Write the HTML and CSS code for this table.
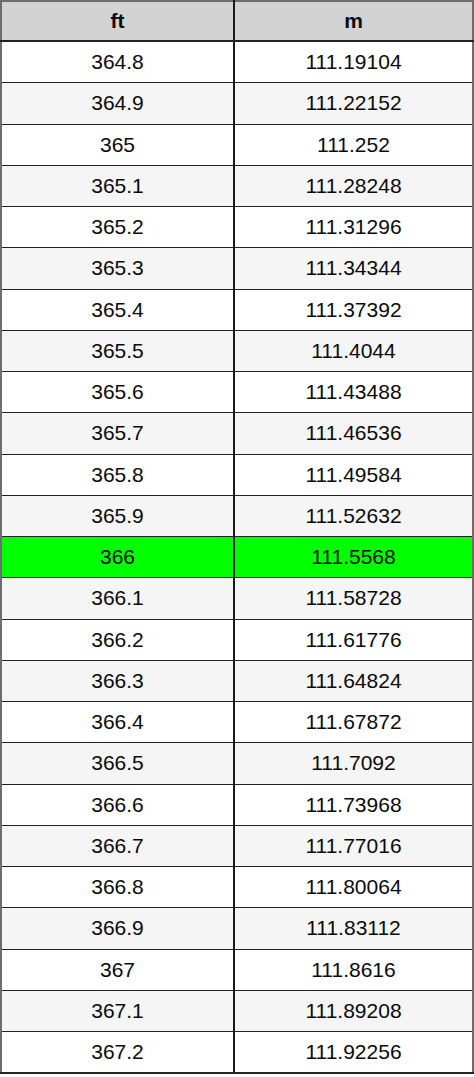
FILE: index.html
```html
<!DOCTYPE html>
<html>
<head>
<meta charset="utf-8">
<link rel="stylesheet" href="styles.css">
</head>
<body>
<table class="conv">
<thead>
<tr><th class="c1">ft</th><th>m</th></tr>
</thead>
<tbody>
<tr><td>364.8</td><td>111.19104</td></tr>
<tr class="alt"><td>364.9</td><td>111.22152</td></tr>
<tr><td>365</td><td>111.252</td></tr>
<tr class="alt"><td>365.1</td><td>111.28248</td></tr>
<tr><td>365.2</td><td>111.31296</td></tr>
<tr class="alt"><td>365.3</td><td>111.34344</td></tr>
<tr><td>365.4</td><td>111.37392</td></tr>
<tr class="alt"><td>365.5</td><td>111.4044</td></tr>
<tr><td>365.6</td><td>111.43488</td></tr>
<tr class="alt"><td>365.7</td><td>111.46536</td></tr>
<tr><td>365.8</td><td>111.49584</td></tr>
<tr class="alt"><td>365.9</td><td>111.52632</td></tr>
<tr class="hl"><td>366</td><td>111.5568</td></tr>
<tr class="alt"><td>366.1</td><td>111.58728</td></tr>
<tr><td>366.2</td><td>111.61776</td></tr>
<tr class="alt"><td>366.3</td><td>111.64824</td></tr>
<tr><td>366.4</td><td>111.67872</td></tr>
<tr class="alt"><td>366.5</td><td>111.7092</td></tr>
<tr><td>366.6</td><td>111.73968</td></tr>
<tr class="alt"><td>366.7</td><td>111.77016</td></tr>
<tr><td>366.8</td><td>111.80064</td></tr>
<tr class="alt"><td>366.9</td><td>111.83112</td></tr>
<tr><td>367</td><td>111.8616</td></tr>
<tr class="alt"><td>367.1</td><td>111.89208</td></tr>
<tr><td>367.2</td><td>111.92256</td></tr>
</tbody>
</table>
</body>
</html>
```
FILE: styles.css
```css
html, body {
  margin: 0;
  padding: 0;
  background: #ffffff;
}
.conv {
  width: 474px;
  border-collapse: collapse;
  border: 2px solid #6e6e6e;
  font-family: "Liberation Sans", Arial, sans-serif;
  font-size: 21px;
  color: #0a0a0a;
  table-layout: fixed;
}
.conv th {
  background: #d3d3d3;
  font-weight: bold;
  height: 38px;
  padding: 0;
  text-align: center;
  border: 1px solid #333333;
  border-top: 2px solid #6e6e6e;
  border-bottom: 2px solid #222222;
}
.conv th.c1 {
  width: 231px;
}
.conv td {
  height: 40.25px;
  padding: 0;
  text-align: center;
  border: 1px solid #222222;
  background: #ffffff;
}
.conv th:first-child, .conv td:first-child {
  border-left: 2px solid #6e6e6e;
  border-right: 2px solid #1a1a1a;
}
.conv th:last-child, .conv td:last-child {
  border-right: 2px solid #6e6e6e;
}
.conv tr.alt td {
  background: #f5f5f5;
}
.conv tr.hl td {
  background: #00ff00;
}
.conv tbody tr:last-child td {
  border-bottom: 2px solid #222222;
}
```
